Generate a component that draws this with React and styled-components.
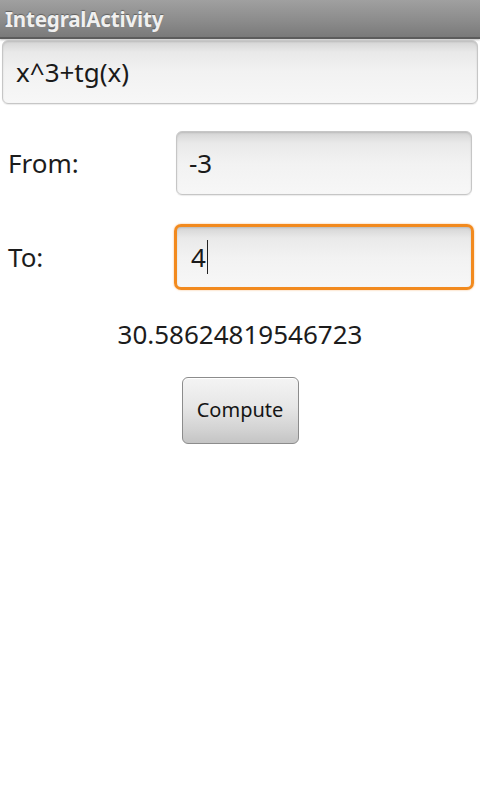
import React from "react";
import styled, { createGlobalStyle } from "styled-components";

const GlobalStyle = createGlobalStyle`
  html, body {
    margin: 0;
    padding: 0;
    background: #ffffff;
  }
  body {
    font-family: "Noto Sans", "Open Sans", "DejaVu Sans", sans-serif;
    width: 480px;
    height: 800px;
    overflow: hidden;
  }
`;

const App = () => {
  return (
    <Screen>
      <GlobalStyle />
      <TitleBar>
        <Title>IntegralActivity</Title>
      </TitleBar>
      <Content>
        <FormulaField>
          <FieldText>x^3+tg(x)</FieldText>
        </FormulaField>
        <Form>
          <Label>From:</Label>
          <Field>
            <FieldText>-3</FieldText>
          </Field>
          <Label>To:</Label>
          <Field focused>
            <FieldText>4</FieldText>
            <Caret />
          </Field>
        </Form>
        <Result>30.58624819546723</Result>
        <ComputeButton>Compute</ComputeButton>
      </Content>
    </Screen>
  );
};

export default App;

const Screen = styled.div`
  width: 480px;
  height: 800px;
  display: flex;
  flex-direction: column;
  background: #ffffff;
`;

const TitleBar = styled.header`
  height: 37px;
  display: flex;
  align-items: center;
  padding-left: 5px;
  background: linear-gradient(#a0a0a0, #8c8c8c 55%, #7a7a7a);
  border-bottom: 2px solid #5c5c5c;
  box-shadow: 0 1px 2px rgba(0, 0, 0, 0.25);
`;

const Title = styled.h1`
  margin: 0;
  font-size: 20.6px;
  font-weight: 700;
  color: #f0f0f0;
  letter-spacing: -0.2px;
  text-shadow: 0 -1px 1px rgba(0, 0, 0, 0.35);
`;

const Content = styled.main`
  display: flex;
  flex-direction: column;
  align-items: center;
  padding-top: 1px;
`;

const fieldBase = `
  box-sizing: border-box;
  display: flex;
  align-items: center;
  background: linear-gradient(#d4d4d4, #e9e9e9 18%, #f2f2f2 50%, #f7f7f7);
  border: 1px solid #c6c6c6;
  border-radius: 6px;
  box-shadow: inset 0 1px 2px rgba(0, 0, 0, 0.12), 0 1px 1px rgba(0, 0, 0, 0.08);
`;

const FormulaField = styled.div`
  ${fieldBase}
  width: 476px;
  height: 64px;
  padding-left: 13px;
`;

const Form = styled.div`
  width: 480px;
  display: grid;
  grid-template-columns: 172px 1fr;
  grid-template-rows: 64px 66px;
  row-gap: 29px;
  margin-top: 27px;
  align-items: center;
`;

const Label = styled.span`
  padding-left: 8px;
  font-size: 26px;
  color: #1c1c1c;
`;

const Field = styled.div`
  ${fieldBase}
  height: ${(p) => (p.focused ? "66px" : "64px")};
  margin-left: ${(p) => (p.focused ? "2px" : "4px")};
  margin-right: ${(p) => (p.focused ? "6px" : "8px")};
  padding-left: ${(p) => (p.focused ? "14px" : "12px")};
  border: ${(p) => (p.focused ? "3px solid #f28a1e" : "1px solid #c6c6c6")};
  border-radius: ${(p) => (p.focused ? "7px" : "6px")};
  box-shadow: ${(p) =>
    p.focused
      ? "0 0 2px rgba(240, 130, 20, 0.6), inset 0 1px 2px rgba(0, 0, 0, 0.12)"
      : "inset 0 1px 2px rgba(0, 0, 0, 0.12), 0 1px 1px rgba(0, 0, 0, 0.08)"};
`;

const FieldText = styled.span`
  font-size: 26px;
  color: #1a1a1a;
  line-height: 1;
`;

const Caret = styled.span`
  display: inline-block;
  width: 1.5px;
  height: 34px;
  margin-left: 1px;
  background: #222222;
`;

const Result = styled.div`
  margin-top: 26px;
  font-size: 26px;
  color: #1c1c1c;
  line-height: 36px;
`;

const ComputeButton = styled.button`
  margin-top: 25px;
  width: 117px;
  height: 67px;
  font-family: "Noto Sans", "Open Sans", "DejaVu Sans", sans-serif;
  font-size: 20px;
  color: #151515;
  background: linear-gradient(#f4f4f4, #e6e6e6 45%, #d2d2d2 80%, #c4c4c4);
  border: 1px solid #8c8c8c;
  border-radius: 6px;
  box-shadow: inset 0 1px 0 #ffffff;
  padding: 0;
  padding-bottom: 3px;
`;
